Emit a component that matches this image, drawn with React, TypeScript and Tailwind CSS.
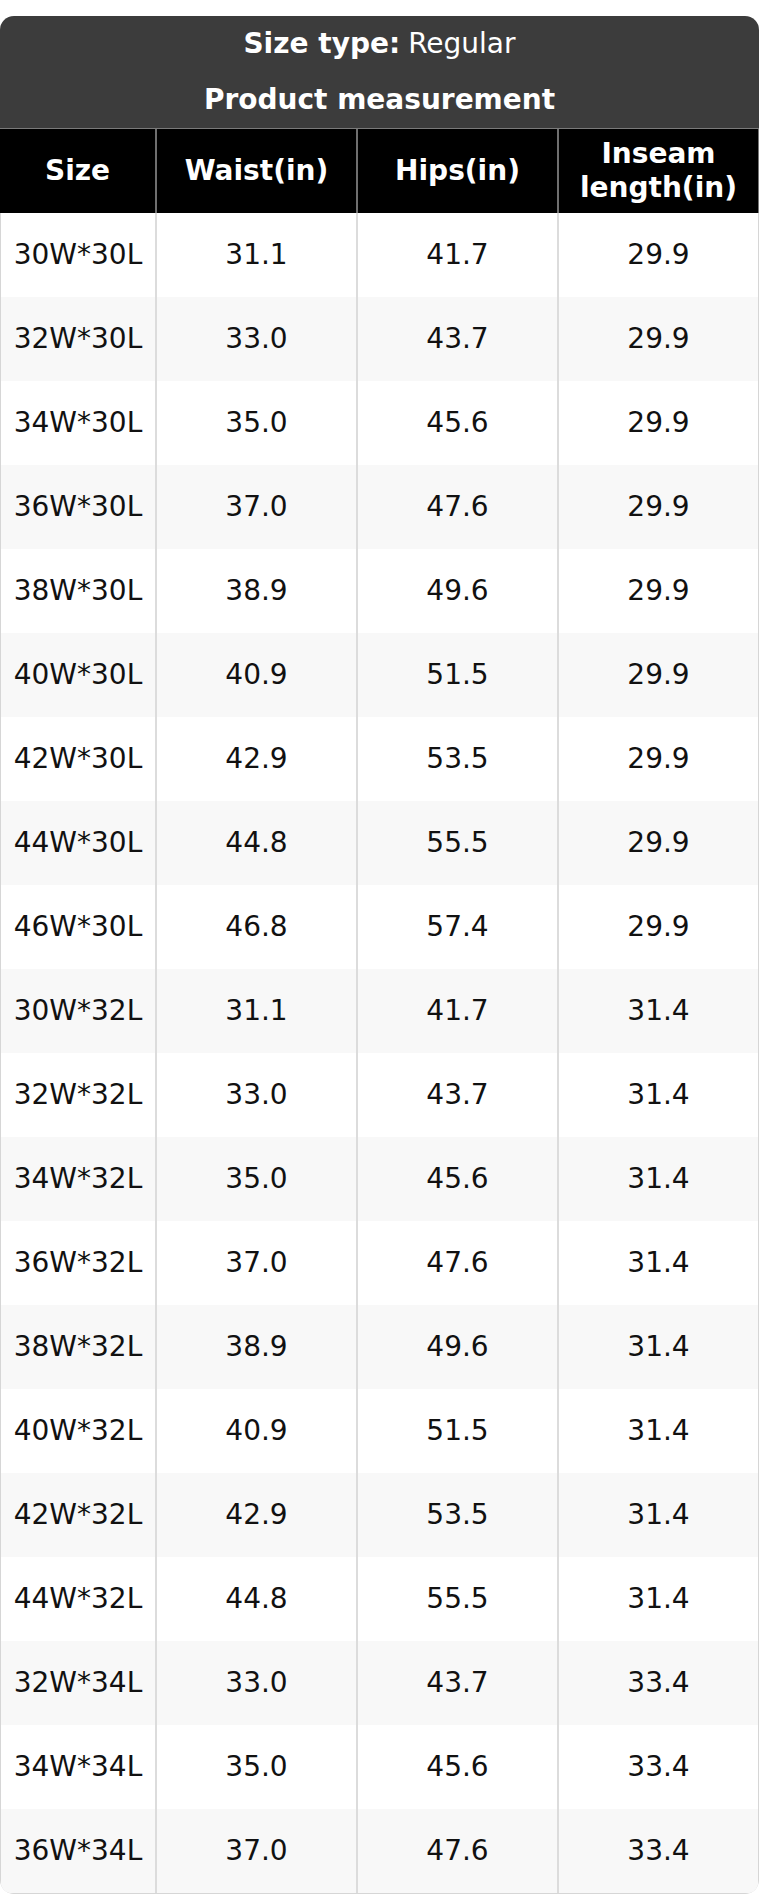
const rows: [string, string, string, string][] = [
  ["30W*30L", "31.1", "41.7", "29.9"],
  ["32W*30L", "33.0", "43.7", "29.9"],
  ["34W*30L", "35.0", "45.6", "29.9"],
  ["36W*30L", "37.0", "47.6", "29.9"],
  ["38W*30L", "38.9", "49.6", "29.9"],
  ["40W*30L", "40.9", "51.5", "29.9"],
  ["42W*30L", "42.9", "53.5", "29.9"],
  ["44W*30L", "44.8", "55.5", "29.9"],
  ["46W*30L", "46.8", "57.4", "29.9"],
  ["30W*32L", "31.1", "41.7", "31.4"],
  ["32W*32L", "33.0", "43.7", "31.4"],
  ["34W*32L", "35.0", "45.6", "31.4"],
  ["36W*32L", "37.0", "47.6", "31.4"],
  ["38W*32L", "38.9", "49.6", "31.4"],
  ["40W*32L", "40.9", "51.5", "31.4"],
  ["42W*32L", "42.9", "53.5", "31.4"],
  ["44W*32L", "44.8", "55.5", "31.4"],
  ["32W*34L", "33.0", "43.7", "33.4"],
  ["34W*34L", "35.0", "45.6", "33.4"],
  ["36W*34L", "37.0", "47.6", "33.4"],
]

const headers = ["Size", "Waist(in)", "Hips(in)", "Inseam length(in)"]

export default function App() {
  return (
    <div className="bg-white pt-4 text-[28px] text-[#111] font-['DejaVu_Sans',sans-serif]">
      <div className="w-[759px] rounded-[14px] overflow-hidden">
        {/* Title */}
        <div className="bg-[#3c3c3c] text-white text-center border-b border-[#7a7a7a]">
          <div className="h-14 flex items-center justify-center">
            <span className="font-bold">Size type:</span>
            <span className="ml-2">Regular</span>
          </div>
          <div className="h-14 flex items-center justify-center font-bold">Product measurement</div>
        </div>

        {/* Column headers */}
        <div className="grid grid-cols-[155px_201px_201px_1fr] h-[84px] bg-black text-white font-bold leading-[1.2] border-r border-[#777]">
          {headers.map((h, i) => (
            <div
              key={h}
              className={`flex items-center justify-center text-center px-2 ${i > 0 ? "border-l-2 border-[#6f6f6f]" : ""}`}
            >
              {i === 3 ? (
                <span>
                  Inseam
                  <br />
                  length(in)
                </span>
              ) : (
                h
              )}
            </div>
          ))}
        </div>

        {/* Body */}
        <div className="border-x border-b border-[#d6d6d6] rounded-b-[12px] overflow-hidden">
          {rows.map((r, ri) => (
            <div
              key={ri}
              className={`grid grid-cols-[154px_201px_201px_1fr] h-[84px] ${ri % 2 === 1 ? "bg-[#f8f8f8]" : "bg-white"}`}
            >
              {r.map((c, ci) => (
                <div
                  key={ci}
                  className={`flex items-center justify-center ${ci > 0 ? "border-l-2 border-[#dcdcdc]" : ""}`}
                >
                  {c}
                </div>
              ))}
            </div>
          ))}
        </div>
      </div>
    </div>
  )
}
